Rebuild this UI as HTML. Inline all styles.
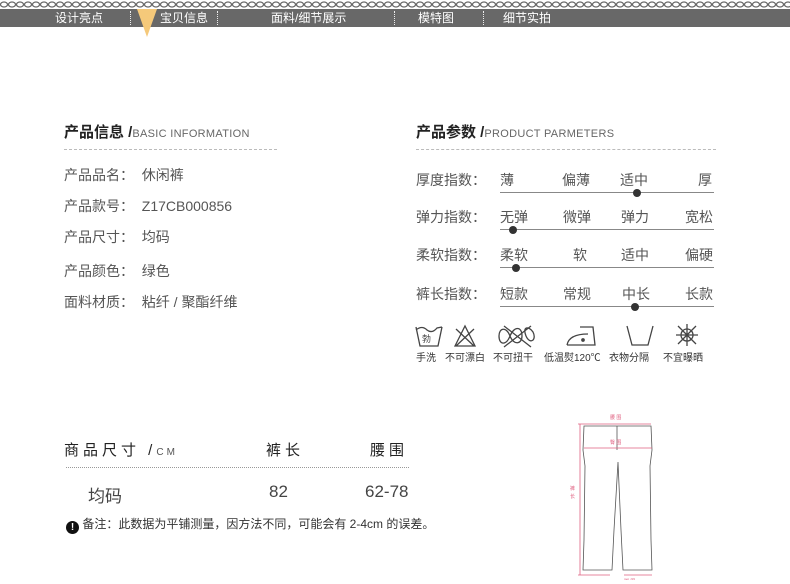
<!DOCTYPE html>
<html><head><meta charset="utf-8"><style>
body{margin:0;width:790px;height:584px;background:#fff;position:relative;overflow:hidden;font-family:"Liberation Sans","Noto Sans CJK SC",sans-serif;color:#555}
.a{position:absolute;white-space:nowrap}
.nav{position:absolute;left:0;top:9px;width:790px;height:18px;background:#686868}
.nav span{position:absolute;top:1px;color:#fff;font-size:12px;line-height:16px}
.dv{position:absolute;top:11px;height:14px;border-left:1px dotted #eee}
.t{font-size:15px;color:#222;font-weight:bold}
.t small{font-size:11px;color:#666;font-weight:normal;letter-spacing:.3px}
.r{font-size:14px;color:#555}
.line{position:absolute;height:1px;background:#888}
.dot{position:absolute;width:8px;height:8px;border-radius:50%;background:#333}
.ic{font-size:10px;color:#333}
</style></head><body>
<svg class="a" style="left:0;top:0" width="790" height="9"><defs><pattern id="c" width="8" height="9" patternUnits="userSpaceOnUse"><ellipse cx="4" cy="4.5" rx="3.5" ry="2.5" fill="none" stroke="#666" stroke-width="1.2"/></pattern></defs><rect width="790" height="9" fill="url(#c)"/></svg>
<div class="nav"></div>
<div class="nav" style="background:none">
<span style="left:55px">设计亮点</span><span style="left:160px">宝贝信息</span><span style="left:271px">面料/细节展示</span><span style="left:418px">模特图</span><span style="left:503px">细节实拍</span></div>
<div class="dv" style="left:130px"></div><div class="dv" style="left:217px"></div><div class="dv" style="left:394px"></div><div class="dv" style="left:483px"></div>
<svg class="a" style="left:137px;top:9px" width="20" height="29"><polygon points="0,0 20,0 10,28" fill="#f5c97a"/></svg>

<div class="a t" style="left:64px;top:121px">产品信息 /<small>BASIC INFORMATION</small></div>
<div class="a" style="left:64px;top:149px;width:213px;border-top:1px dashed #bbb"></div>
<div class="a r" style="left:64px;top:165px">产品品名：&nbsp; 休闲裤</div>
<div class="a r" style="left:64px;top:196px">产品款号：&nbsp; Z17CB000856</div>
<div class="a r" style="left:64px;top:227px">产品尺寸：&nbsp; 均码</div>
<div class="a r" style="left:64px;top:261px">产品颜色：&nbsp; 绿色</div>
<div class="a r" style="left:64px;top:292px">面料材质：&nbsp; 粘纤 / 聚酯纤维</div>

<div class="a t" style="left:416px;top:121px">产品参数 /<small>PRODUCT PARMETERS</small></div>
<div class="a" style="left:416px;top:149px;width:300px;border-top:1px dashed #bbb"></div>

<div class="a r" style="left:416px;top:170px">厚度指数：</div>
<div class="a r" style="left:500px;top:170px">薄</div><div class="a r" style="left:562px;top:170px">偏薄</div><div class="a r" style="left:620px;top:170px">适中</div><div class="a r" style="left:698px;top:170px">厚</div>
<div class="line" style="left:500px;top:192px;width:214px"></div><div class="dot" style="left:633px;top:189px"></div>

<div class="a r" style="left:416px;top:207px">弹力指数：</div>
<div class="a r" style="left:500px;top:207px">无弹</div><div class="a r" style="left:563px;top:207px">微弹</div><div class="a r" style="left:621px;top:207px">弹力</div><div class="a r" style="left:685px;top:207px">宽松</div>
<div class="line" style="left:500px;top:229px;width:214px"></div><div class="dot" style="left:509px;top:226px"></div>

<div class="a r" style="left:416px;top:245px">柔软指数：</div>
<div class="a r" style="left:500px;top:245px">柔软</div><div class="a r" style="left:573px;top:245px">软</div><div class="a r" style="left:621px;top:245px">适中</div><div class="a r" style="left:685px;top:245px">偏硬</div>
<div class="line" style="left:500px;top:267px;width:214px"></div><div class="dot" style="left:512px;top:264px"></div>

<div class="a r" style="left:416px;top:284px">裤长指数：</div>
<div class="a r" style="left:500px;top:284px">短款</div><div class="a r" style="left:563px;top:284px">常规</div><div class="a r" style="left:622px;top:284px">中长</div><div class="a r" style="left:685px;top:284px">长款</div>
<div class="line" style="left:500px;top:306px;width:214px"></div><div class="dot" style="left:631px;top:303px"></div>

<svg class="a" style="left:410px;top:322px" width="310" height="28" fill="none" stroke="#444" stroke-width="1.3">
<path d="M6 5 L10 24 H28 L32 5 M6 8 Q12 3 17 8 Q22 12 27 6 L32 5"/><text x="12" y="20" font-size="9" fill="#444" stroke="none" font-family="Noto Sans CJK SC">勃</text>
<path d="M45 24 L55 4 L65 24 Z M46 7 L64 24 M64 7 L46 24"/>
<path d="M100 14 C96 4 89 6 89 14 C89 23 96 24 100 14 C104 4 112 4 112 14 C112 22 104 24 100 14 M116 14 C112 4 119 4 123 10 C127 18 120 23 116 14"/><path d="M94 4 L121 25 M94 25 L121 4"/>
<path d="M157 23 H185 L183 5 H170 M157 23 Q159 12 178 12"/><circle cx="173" cy="18" r="1.2" fill="#444"/>
<path d="M217 4 L222 23 H238 L243 4"/>
<circle cx="277" cy="13" r="6"/><path d="M268 4 L286 22 M286 4 L268 22 M277 2 V24 M266 13 H288"/>
</svg>
<div class="a ic" style="left:416px;top:349px">手洗</div>
<div class="a ic" style="left:445px;top:349px">不可漂白</div>
<div class="a ic" style="left:493px;top:349px">不可扭干</div>
<div class="a ic" style="left:544px;top:349px">低温熨120℃</div>
<div class="a ic" style="left:609px;top:349px">衣物分隔</div>
<div class="a ic" style="left:663px;top:349px">不宜曝晒</div>

<div class="a" style="left:64px;top:439px;font-size:15px;color:#222;letter-spacing:4px">商品尺寸 /<span style="font-size:10px;letter-spacing:3px;color:#555">CM</span></div>
<div class="a" style="left:266px;top:439px;font-size:15px;color:#222;letter-spacing:4px">裤长</div>
<div class="a" style="left:370px;top:439px;font-size:15px;color:#222;letter-spacing:4px">腰围</div>
<div class="a" style="left:66px;top:467px;width:343px;border-top:1px dotted #999"></div>
<div class="a" style="left:88px;top:482px;font-size:17px;color:#444">均码</div>
<div class="a" style="left:269px;top:482px;font-size:17px;color:#444">82</div>
<div class="a" style="left:365px;top:482px;font-size:17px;color:#444">62-78</div>
<div class="a" style="left:66px;top:515px;font-size:12px;color:#333"><span style="display:inline-block;width:13px;height:13px;border-radius:50%;background:#111;color:#fff;font-size:10px;text-align:center;line-height:13px;font-weight:bold;vertical-align:-2px">!</span> 备注：此数据为平铺测量，因方法不同，可能会有 2-4cm 的误差。</div>

<svg class="a" style="left:560px;top:410px" width="110" height="170" fill="none" stroke="#555" stroke-width="0.8">
<path d="M24 16 L23 40 L25 56 L24 130 L23 160 L52 160 L54 120 L58 52 L61 120 L63 160 L92 160 L91 130 L90 56 L92 40 L91 16 Z"/>
<path d="M57 16 V40"/>
<g stroke="#e06080"><path d="M24 14 H91 M20 14 V165 M18 14 H28 M18 165 H50 M24 38 H92 M64 165 H92"/></g>
<text x="50" y="9" font-size="5" fill="#e06080" stroke="none">腰 围</text>
<text x="50" y="34" font-size="5" fill="#e06080" stroke="none">臀 围</text>
<text x="10" y="80" font-size="5" fill="#e06080" stroke="none">裤</text>
<text x="10" y="88" font-size="5" fill="#e06080" stroke="none">长</text>
<text x="64" y="173" font-size="5" fill="#e06080" stroke="none">脚 围</text>
</svg>
</body></html>
